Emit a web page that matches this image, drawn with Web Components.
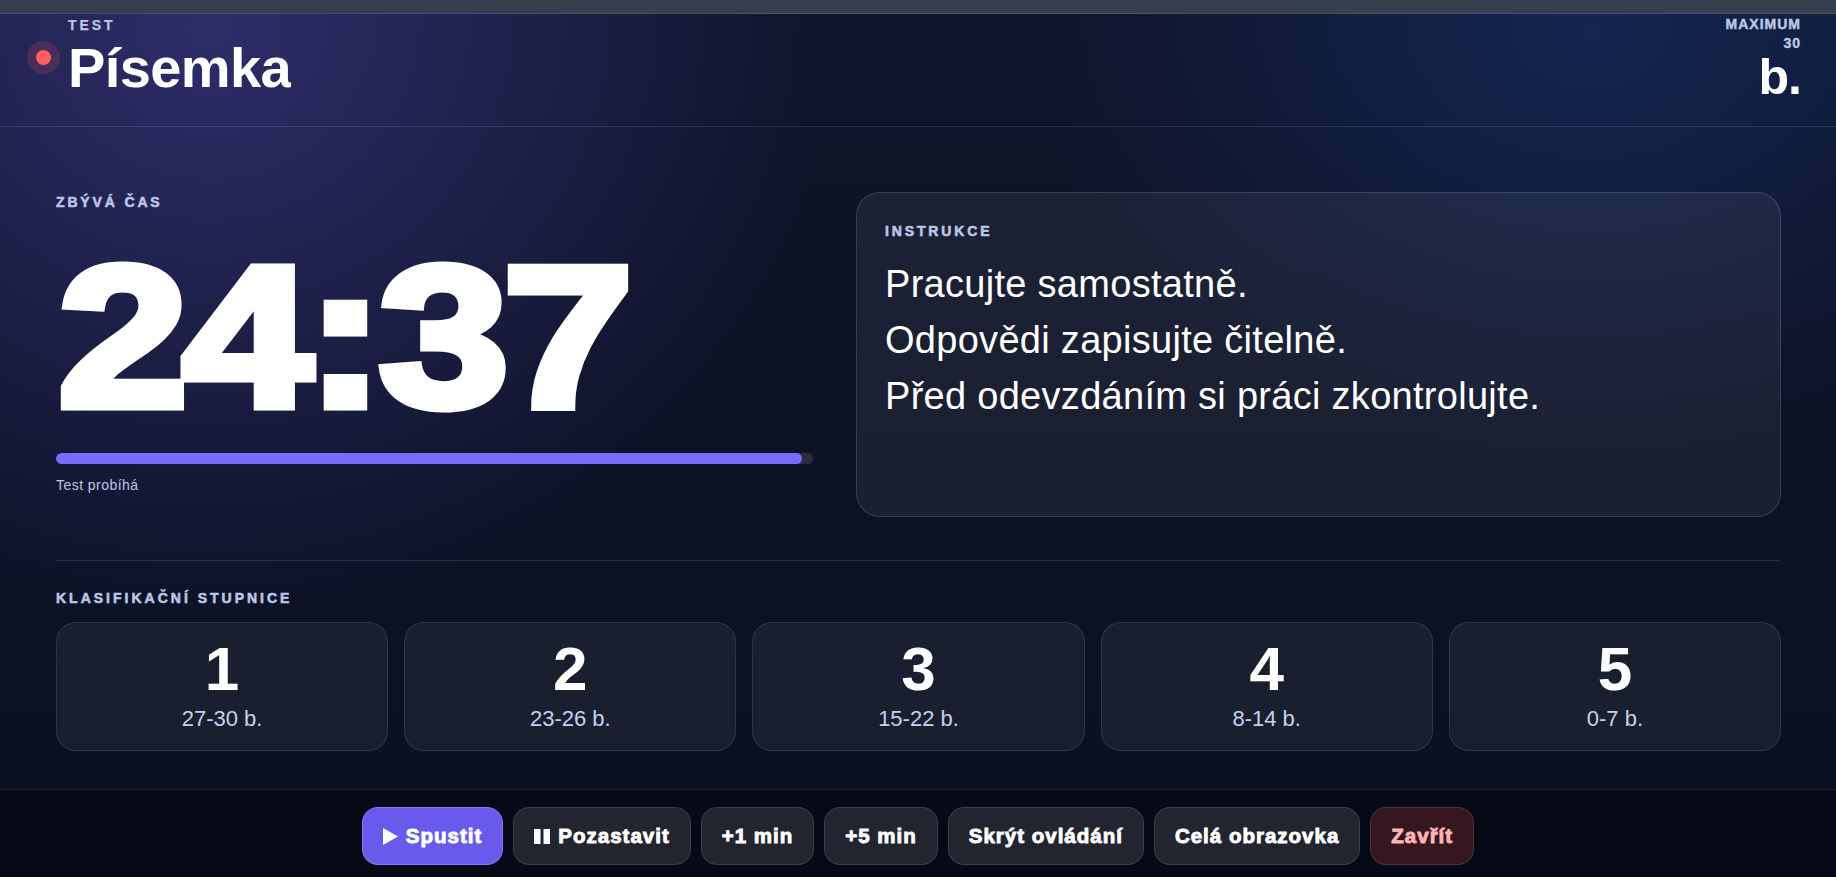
<!DOCTYPE html>
<html lang="cs">
<head>
<meta charset="utf-8">
<title>Písemka</title>
<style>
  html, body { margin: 0; height: 100%; overflow: hidden; background: #0a0e20; }
  body { font-family: "Liberation Sans", Arial, sans-serif; color: #fff; }
</style>
</head>
<body>
<exam-app></exam-app>

<template id="tpl-label">
  <style>
    :host {
      display: block;
      font-size: 14px;
      line-height: 16px;
      font-weight: 700;
      letter-spacing: 2.85px;
      color: #bcc7e6;
      -webkit-text-stroke: .55px #bcc7e6;
    }
  </style>
  <slot></slot>
</template>

<template id="tpl-header">
  <style>
    :host {
      display: flex;
      flex: none;
      justify-content: space-between;
      box-sizing: border-box;
      height: 113px;
      padding: 0 35px 0 36px;
      border-bottom: 1px solid rgba(255,255,255,.12);
    }
    .left { display: flex; align-items: center; gap: 17px; height: 87px; overflow: hidden; padding-left: 9px; margin-left: -9px; }
    .dot {
      flex: none;
      width: 15px;
      height: 15px;
      border-radius: 50%;
      background: #ff5f5f;
      box-shadow: 0 0 0 9px rgba(255,95,95,.16);
    }
    .kicker {
      font-size: 14px;
      line-height: 20px;
      font-weight: 700;
      letter-spacing: 2.9px;
      color: #bcc7e6;
      -webkit-text-stroke: .25px #bcc7e6;
    }
    h1 {
      margin: 1px 0 1px;
      font-size: 56px;
      line-height: 64px;
      font-weight: 700;
      letter-spacing: -.6px;
    }
    .right { text-align: right; }
    .max {
      font-size: 14px;
      line-height: 19px;
      font-weight: 700;
      letter-spacing: 1px;
      padding-top: 1px;
      color: #bcc7e6;
      -webkit-text-stroke: .45px #bcc7e6;
    }
    .unit { font-size: 50px; line-height: 48px; font-weight: 700; letter-spacing: -1px; }
  </style>
  <div class="left">
    <span class="dot"></span>
    <div>
      <div class="kicker">TEST</div>
      <h1>Písemka</h1>
    </div>
  </div>
  <div class="right">
    <div class="max">MAXIMUM<br>30</div>
    <div class="unit">b.</div>
  </div>
</template>

<template id="tpl-timer">
  <style>
    :host { display: block; padding-top: 2px; }
    .clock {
      margin: 27px 0 0 2px;
      height: 200px;
      font-size: 200px;
      line-height: 200px;
      font-weight: 700;
      letter-spacing: -5px;
      white-space: nowrap;
      color: #fff;
      -webkit-text-stroke: 9px #fff;
      transform: scaleX(1.17);
      transform-origin: 0 50%;
    }
    .track {
      margin-top: 16px;
      height: 11px;
      border-radius: 6px;
      background: rgba(255,255,255,.12);
      overflow: hidden;
    }
    .fill { width: 98.5%; height: 100%; border-radius: 6px; background: #7a6bff; }
    .status { margin-top: 12px; font-size: 14px; line-height: 18px; letter-spacing: .45px; color: #bcc7e6; }
  </style>
  <exam-label>ZBÝVÁ ČAS</exam-label>
  <div class="clock">24:37</div>
  <div class="track"><div class="fill"></div></div>
  <div class="status">Test probíhá</div>
</template>

<template id="tpl-instructions">
  <style>
    :host {
      display: block;
      box-sizing: border-box;
      height: 325px;
      padding: 30px 28px;
      border: 1px solid rgba(255,255,255,.14);
      border-radius: 24px;
      background: rgba(255,255,255,.06);
    }
    .text { margin-top: 17px; font-size: 38px; line-height: 56px; letter-spacing: .29px; color: #fff; }
    .text div { white-space: nowrap; }
  </style>
  <exam-label>INSTRUKCE</exam-label>
  <div class="text">
    <div>Pracujte samostatně.</div>
    <div>Odpovědi zapisujte čitelně.</div>
    <div>Před odevzdáním si práci zkontrolujte.</div>
  </div>
</template>

<template id="tpl-grade">
  <style>
    :host {
      display: block;
      box-sizing: border-box;
      height: 129px;
      padding-top: 12px;
      text-align: center;
      border: 1px solid rgba(255,255,255,.1);
      border-radius: 20px;
      background: rgba(255,255,255,.06);
    }
    .mark { font-size: 62px; line-height: 68px; font-weight: 700; color: #fff; }
    .range { margin-top: 3px; font-size: 22px; line-height: 26px; color: #c6d1ee; }
  </style>
  <div class="mark"></div>
  <div class="range"></div>
</template>

<template id="tpl-scale">
  <style>
    :host { display: block; margin-top: 43px; padding-top: 29px; border-top: 1px solid rgba(255,255,255,.12); }
    .grades { display: grid; grid-template-columns: repeat(5, 1fr); gap: 16px; margin-top: 16px; }
    exam-label { letter-spacing: 3px; }
  </style>
  <exam-label>KLASIFIKAČNÍ STUPNICE</exam-label>
  <div class="grades">
    <grade-card mark="1" range="27-30 b."></grade-card>
    <grade-card mark="2" range="23-26 b."></grade-card>
    <grade-card mark="3" range="15-22 b."></grade-card>
    <grade-card mark="4" range="8-14 b."></grade-card>
    <grade-card mark="5" range="0-7 b."></grade-card>
  </div>
</template>

<template id="tpl-button">
  <style>
    :host { display: inline-flex; }
    button {
      display: inline-flex;
      align-items: center;
      gap: 8px;
      box-sizing: border-box;
      height: 58px;
      padding: 0 20px;
      border: 1px solid rgba(255,255,255,.12);
      border-radius: 16px;
      background: #22252f;
      color: #fff;
      font: 700 20.5px "Liberation Sans", Arial, sans-serif;
      letter-spacing: 1px;
      -webkit-text-stroke: .9px currentColor;
      white-space: nowrap;
    }
    :host([kind=primary]) button { background: #6a5aec; border-color: rgba(255,255,255,.18); }
    :host([kind=danger]) button { background: #36161f; color: #ffb4b8; }
    ::slotted(svg) { display: block; flex: none; fill: currentColor; }
  </style>
  <button><slot name="icon"></slot><slot></slot></button>
</template>

<template id="tpl-controls">
  <style>
    :host {
      display: flex;
      flex: none;
      justify-content: center;
      gap: 10px;
      box-sizing: border-box;
      height: 88px;
      padding-top: 17px;
      border-top: 1px solid rgba(255,255,255,.1);
      background: rgba(3,5,14,.62);
    }
  </style>
  <ctl-button kind="primary"><svg slot="icon" width="15" height="17" viewBox="0 0 15 17"><path d="M0 0 15 8.5 0 17Z"/></svg>Spustit</ctl-button>
  <ctl-button><svg slot="icon" width="16" height="15" viewBox="0 0 16 15"><path d="M0 0H6.5V15H0ZM9.5 0H16V15H9.5Z"/></svg>Pozastavit</ctl-button>
  <ctl-button>+1 min</ctl-button>
  <ctl-button>+5 min</ctl-button>
  <ctl-button>Skrýt ovládání</ctl-button>
  <ctl-button>Celá obrazovka</ctl-button>
  <ctl-button kind="danger">Zavřít</ctl-button>
</template>

<template id="tpl-app">
  <style>
    :host {
      display: flex;
      flex-direction: column;
      width: 100vw;
      height: 100vh;
      overflow: hidden;
      background:
        radial-gradient(ellipse 620px 600px at 210px 30px, rgba(108,92,231,.34), transparent 100%),
        radial-gradient(ellipse 560px 420px at 1590px 30px, rgba(30,90,190,.26), transparent 100%),
        linear-gradient(180deg, #0f142a 0%, #0b1022 100%);
    }
    .strip { flex: none; height: 13px; background: #343e4e; border-bottom: 1px solid #4b525b; }
    main { flex: 1; min-height: 0; padding: 65px 55px 0 56px; }
    .top { display: grid; grid-template-columns: 757px 1fr; column-gap: 43px; }
  </style>
  <div class="strip"></div>
  <exam-header></exam-header>
  <main>
    <div class="top">
      <timer-panel></timer-panel>
      <instructions-card></instructions-card>
    </div>
    <grade-scale></grade-scale>
  </main>
  <control-bar></control-bar>
</template>

<script>
  // each element just stamps its template into an open shadow root
  class TemplateElement extends HTMLElement {
    constructor(id) {
      super();
      this.attachShadow({ mode: 'open' });
      this.shadowRoot.appendChild(document.getElementById(id).content.cloneNode(true));
    }
  }

  class GradeCard extends TemplateElement {
    constructor() { super('tpl-grade'); }
    connectedCallback() {
      this.shadowRoot.querySelector('.mark').textContent = this.getAttribute('mark');
      this.shadowRoot.querySelector('.range').textContent = this.getAttribute('range');
    }
  }

  const simple = {
    'exam-label': 'tpl-label',
    'exam-header': 'tpl-header',
    'timer-panel': 'tpl-timer',
    'instructions-card': 'tpl-instructions',
    'grade-scale': 'tpl-scale',
    'ctl-button': 'tpl-button',
    'control-bar': 'tpl-controls',
    'exam-app': 'tpl-app',
  };

  customElements.define('grade-card', GradeCard);
  for (const [name, id] of Object.entries(simple)) {
    customElements.define(name, class extends TemplateElement {
      constructor() { super(id); }
    });
  }
</script>
</body>
</html>
